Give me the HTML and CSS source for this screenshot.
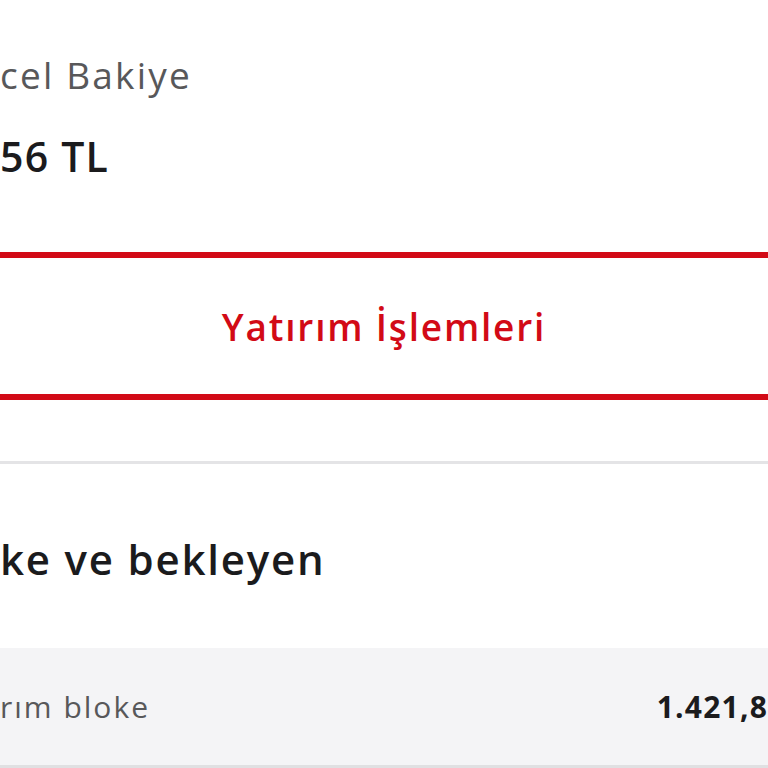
FILE: index.html
```html
<!DOCTYPE html>
<html lang="tr">
<head>
<meta charset="utf-8">
<title>Bakiye</title>
<link rel="stylesheet" href="styles.css">
</head>
<body>
<main class="screen">
  <section class="balance">
    <div class="balance-label">cel Bakiye</div>
    <div class="balance-amount">56 TL</div>
  </section>
  <div class="action">
    <button class="action-btn" type="button">Yatırım İşlemleri</button>
  </div>
  <hr class="divider">
  <section class="pending">
    <h2 class="pending-title">ke ve bekleyen</h2>
    <div class="pending-row">
      <span class="row-label">rım bloke</span>
      <span class="row-value">1.421,8</span>
    </div>
  </section>
</main>
</body>
</html>
```

FILE: styles.css
```css
html, body {
  margin: 0;
  padding: 0;
  background: #ffffff;
}
body {
  width: 768px;
  height: 768px;
  overflow: hidden;
  font-family: "Open Sans", "Noto Sans", sans-serif;
}
.screen {
  display: flex;
  flex-direction: column;
}
.balance {
  display: flex;
  flex-direction: column;
  padding-top: 52px;
}
.balance-label {
  font-size: 37px;
  line-height: 46px;
  letter-spacing: 2.2px;
  color: #58585a;
  font-weight: 400;
  white-space: nowrap;
}
.balance-amount {
  margin-top: 33px;
  font-size: 41px;
  line-height: 50px;
  letter-spacing: 1.2px;
  color: #1b1b1d;
  font-weight: 600;
  white-space: nowrap;
}
.action {
  margin: 71px -20px 0;
}
.action-btn {
  display: flex;
  align-items: center;
  justify-content: center;
  width: 100%;
  height: 148px;
  box-sizing: border-box;
  border: 6px solid #d20a16;
  background: #ffffff;
  color: #d20a16;
  font-family: inherit;
  font-size: 37px;
  font-weight: 600;
  letter-spacing: 1.8px;
  padding: 0;
  border-radius: 6px;
}
.divider {
  margin: 61px 0 0;
  border: 0;
  height: 3px;
  background: #e4e4e6;
}
.pending {
  display: flex;
  flex-direction: column;
}
.pending-title {
  margin: 69px 0 0;
  font-size: 42px;
  line-height: 52px;
  letter-spacing: 1.8px;
  font-weight: 600;
  color: #1b1b1d;
  white-space: nowrap;
}
.pending-row {
  margin-top: 63px;
  height: 117px;
  display: flex;
  align-items: center;
  justify-content: space-between;
  background: #f4f4f6;
  border-bottom: 3px solid #e0e0e2;
}
.row-label {
  font-size: 30px;
  letter-spacing: 2px;
  color: #58585a;
  white-space: nowrap;
}
.row-value {
  font-size: 30px;
  font-weight: 700;
  letter-spacing: 1.2px;
  color: #1b1b1d;
  white-space: nowrap;
}
```
